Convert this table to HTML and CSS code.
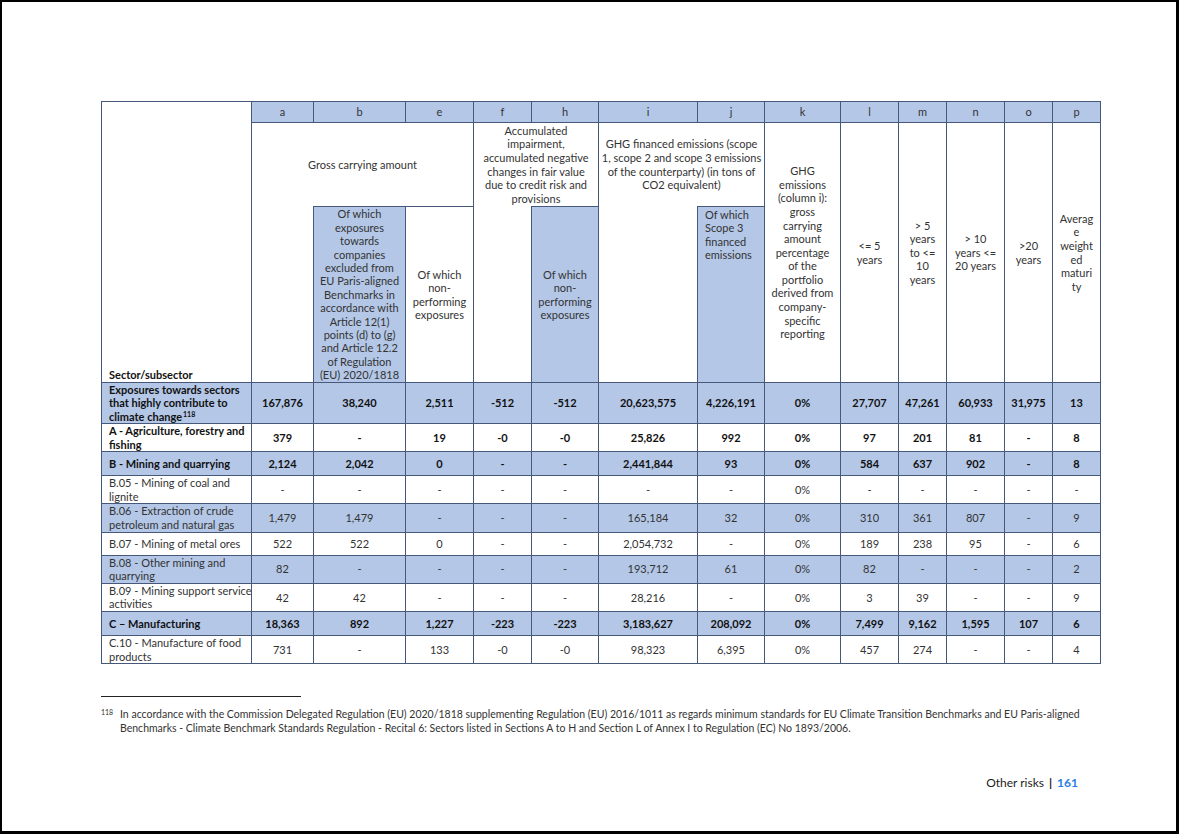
FILE: index.html
```html
<!DOCTYPE html>
<html lang="en">
<head>
<meta charset="utf-8">
<title>Other risks 161</title>
<link rel="stylesheet" href="styles.css">
</head>
<body>
<div class="page">
  <table class="tbl">
    <colgroup>
      <col class="c-sector"><col class="c-a"><col class="c-b"><col class="c-e"><col class="c-f"><col class="c-h"><col class="c-i"><col class="c-j"><col class="c-k"><col class="c-l"><col class="c-m"><col class="c-n"><col class="c-o"><col class="c-p">
    </colgroup>
    <thead>
      <tr class="h-letters">
        <th rowspan="3" class="sector-head">Sector/subsector</th>
        <th class="letter">a</th><th class="letter">b</th><th class="letter">e</th><th class="letter">f</th><th class="letter">h</th><th class="letter">i</th><th class="letter">j</th><th class="letter">k</th><th class="letter">l</th><th class="letter">m</th><th class="letter">n</th><th class="letter">o</th><th class="letter">p</th>
      </tr>
      <tr class="h-main">
        <th colspan="3" class="hd">Gross carrying amount</th>
        <th colspan="2" class="hd">Accumulated<br>impairment,<br>accumulated negative<br>changes in fair value<br>due to credit risk and<br>provisions</th>
        <th colspan="2" class="hd">GHG financed emissions (scope<br>1, scope 2 and scope 3 emissions<br>of the counterparty) (in tons of<br>CO2 equivalent)</th>
        <th rowspan="2" class="hd">GHG<br>emissions<br>(column i):<br>gross<br>carrying<br>amount<br>percentage<br>of the<br>portfolio<br>derived from<br>company-<br>specific<br>reporting</th>
        <th rowspan="2" class="hd">&lt;= 5<br>years</th>
        <th rowspan="2" class="hd">&gt; 5<br>years<br>to &lt;=<br>10<br>years</th>
        <th rowspan="2" class="hd">&gt; 10<br>years &lt;=<br>20 years</th>
        <th rowspan="2" class="hd">&gt;20<br>years</th>
        <th rowspan="2" class="hd">Averag<br>e<br>weight<br>ed<br>maturi<br>ty</th>
      </tr>
      <tr class="h-sub">
        <th class="hd open-top"></th>
        <th class="hd sub-blue">Of which<br>exposures<br>towards<br>companies<br>excluded from<br>EU Paris-aligned<br>Benchmarks in<br>accordance with<br>Article 12(1)<br>points (d) to (g)<br>and Article 12.2<br>of Regulation<br>(EU) 2020/1818</th>
        <th class="hd">Of which<br>non-<br>performing<br>exposures</th>
        <th class="hd open-top"></th>
        <th class="hd sub-blue">Of which<br>non-<br>performing<br>exposures</th>
        <th class="hd open-top"></th>
        <th class="hd sub-blue sub-left">Of which<br>Scope 3<br>financed<br>emissions</th>
      </tr>
    </thead>
    <tbody>
      <tr class="r42 blue bold">
        <td class="name">Exposures towards sectors<br>that highly contribute to<br>climate change<sup>118</sup></td>
        <td>167,876</td><td>38,240</td><td>2,511</td><td>-512</td><td>-512</td><td>20,623,575</td><td>4,226,191</td><td>0%</td><td>27,707</td><td>47,261</td><td>60,933</td><td>31,975</td><td>13</td>
      </tr>
      <tr class="r28 bold">
        <td class="name">A - Agriculture, forestry and<br>fishing</td>
        <td>379</td><td>-</td><td>19</td><td>-0</td><td>-0</td><td>25,826</td><td>992</td><td>0%</td><td>97</td><td>201</td><td>81</td><td>-</td><td>8</td>
      </tr>
      <tr class="r24 blue bold">
        <td class="name">B - Mining and quarrying</td>
        <td>2,124</td><td>2,042</td><td>0</td><td>-</td><td>-</td><td>2,441,844</td><td>93</td><td>0%</td><td>584</td><td>637</td><td>902</td><td>-</td><td>8</td>
      </tr>
      <tr class="r28">
        <td class="name">B.05 - Mining of coal and<br>lignite</td>
        <td>-</td><td>-</td><td>-</td><td>-</td><td>-</td><td>-</td><td>-</td><td>0%</td><td>-</td><td>-</td><td>-</td><td>-</td><td>-</td>
      </tr>
      <tr class="r28 blue">
        <td class="name">B.06 - Extraction of crude<br>petroleum and natural gas</td>
        <td>1,479</td><td>1,479</td><td>-</td><td>-</td><td>-</td><td>165,184</td><td>32</td><td>0%</td><td>310</td><td>361</td><td>807</td><td>-</td><td>9</td>
      </tr>
      <tr class="r23">
        <td class="name">B.07 - Mining of metal ores</td>
        <td>522</td><td>522</td><td>0</td><td>-</td><td>-</td><td>2,054,732</td><td>-</td><td>0%</td><td>189</td><td>238</td><td>95</td><td>-</td><td>6</td>
      </tr>
      <tr class="r28 blue">
        <td class="name">B.08 - Other mining and<br>quarrying</td>
        <td>82</td><td>-</td><td>-</td><td>-</td><td>-</td><td>193,712</td><td>61</td><td>0%</td><td>82</td><td>-</td><td>-</td><td>-</td><td>2</td>
      </tr>
      <tr class="r28">
        <td class="name">B.09 - Mining support service<br>activities</td>
        <td>42</td><td>42</td><td>-</td><td>-</td><td>-</td><td>28,216</td><td>-</td><td>0%</td><td>3</td><td>39</td><td>-</td><td>-</td><td>9</td>
      </tr>
      <tr class="r24 blue bold">
        <td class="name">C – Manufacturing</td>
        <td>18,363</td><td>892</td><td>1,227</td><td>-223</td><td>-223</td><td>3,183,627</td><td>208,092</td><td>0%</td><td>7,499</td><td>9,162</td><td>1,595</td><td>107</td><td>6</td>
      </tr>
      <tr class="r28">
        <td class="name">C.10 - Manufacture of food<br>products</td>
        <td>731</td><td>-</td><td>133</td><td>-0</td><td>-0</td><td>98,323</td><td>6,395</td><td>0%</td><td>457</td><td>274</td><td>-</td><td>-</td><td>4</td>
      </tr>
    </tbody>
  </table>

  <div class="footnote-rule"></div>
  <div class="footnote">
    <span class="fn-num">118</span>
    <div class="fn-text">
      <div class="fn-line1">In accordance with the Commission Delegated Regulation (EU) 2020/1818 supplementing Regulation (EU) 2016/1011 as regards minimum standards for EU Climate Transition Benchmarks and EU Paris-aligned</div>
      <div class="fn-line2">Benchmarks - Climate Benchmark Standards Regulation - Recital 6: Sectors listed in Sections A to H and Section L of Annex I to Regulation (EC) No 1893/2006.</div>
    </div>
  </div>

  <div class="page-footer">
    <span class="section">Other risks</span><span class="sep">|</span><span class="pnum">161</span>
  </div>
</div>
</body>
</html>
```

FILE: styles.css
```css
html, body {
  margin: 0;
  padding: 0;
  background: #ffffff;
}

.page {
  width: 1179px;
  height: 834px;
  box-sizing: border-box;
  border-left: 2px solid #000;
  border-top: 2px solid #000;
  border-right: 3px solid #000;
  border-bottom: 3px solid #000;
  padding: 99px 0 0 99px;
  font-family: Lato, "Open Sans", sans-serif;
  color: #333;
  display: flex;
  flex-direction: column;
}

.tbl {
  border-collapse: collapse;
  table-layout: fixed;
  width: 999px;
  font-size: 11px;
  line-height: 13.6px;
}

.c-sector { width: 150px; }
.c-a { width: 62px; }
.c-b { width: 92px; }
.c-e { width: 68px; }
.c-f { width: 58px; }
.c-h { width: 67px; }
.c-i { width: 99px; }
.c-j { width: 67px; }
.c-k { width: 76px; }
.c-l { width: 58px; }
.c-m { width: 48px; }
.c-n { width: 58px; }
.c-o { width: 48px; }
.c-p { width: 48px; }

.tbl th,
.tbl td {
  border: 1px solid #46597b;
  padding: 0 1px;
  text-align: center;
  vertical-align: middle;
  white-space: nowrap;
  overflow: visible;
}

.tbl th {
  font-weight: normal;
}

.h-letters { height: 21px; }
.h-main { height: 84px; }
.h-sub { height: 176px; }

.h-sub th {
  line-height: 13.4px;
}

.letter {
  background: #b4c7e7;
  color: #333;
}

.sector-head {
  background: #fff;
  vertical-align: bottom !important;
  text-align: left !important;
  font-weight: bold !important;
  color: #111;
  padding: 0 0 0 7px !important;
}

.hd {
  background: #fff;
  color: #333;
}

.open-top {
  border-top-style: hidden !important;
}

.sub-blue {
  background: #b4c7e7;
}

.sub-left {
  text-align: left !important;
  vertical-align: top !important;
  padding: 1px 0 0 7px !important;
}

.r42 { height: 41px; }
.r28 { height: 28px; }
.r24 { height: 24px; }
.r23 { height: 23px; }

.blue td {
  background: #b4c7e7;
}

.bold td {
  font-weight: bold;
  color: #111;
}

.tbl td.name {
  text-align: left;
  padding-left: 7px;
}

.r42 td {
  line-height: 13.3px;
}

.name sup {
  font-size: 7px;
  line-height: 0;
  vertical-align: 4px;
  margin-left: 1px;
}

.footnote-rule {
  width: 200px;
  height: 1px;
  background: #222;
  margin-top: 32px;
}

.footnote {
  display: flex;
  margin-top: 10px;
  font-size: 10.5px;
  line-height: 14px;
  color: #333;
}

.fn-num {
  width: 19px;
  flex: none;
  font-size: 7px;
  line-height: 10px;
}

.fn-text {
  width: 958px;
}

.fn-line1 {
  text-align: justify;
  text-align-last: justify;
  white-space: nowrap;
}

.page-footer {
  display: flex;
  justify-content: flex-end;
  align-items: center;
  padding-right: 98px;
  margin-top: 40px;
  font-size: 12px;
  line-height: 16px;
  color: #222;
}

.sep {
  font-weight: bold;
  margin: 0 5px 0 5px;
}

.pnum {
  color: #2a7de1;
  font-weight: bold;
}
```
